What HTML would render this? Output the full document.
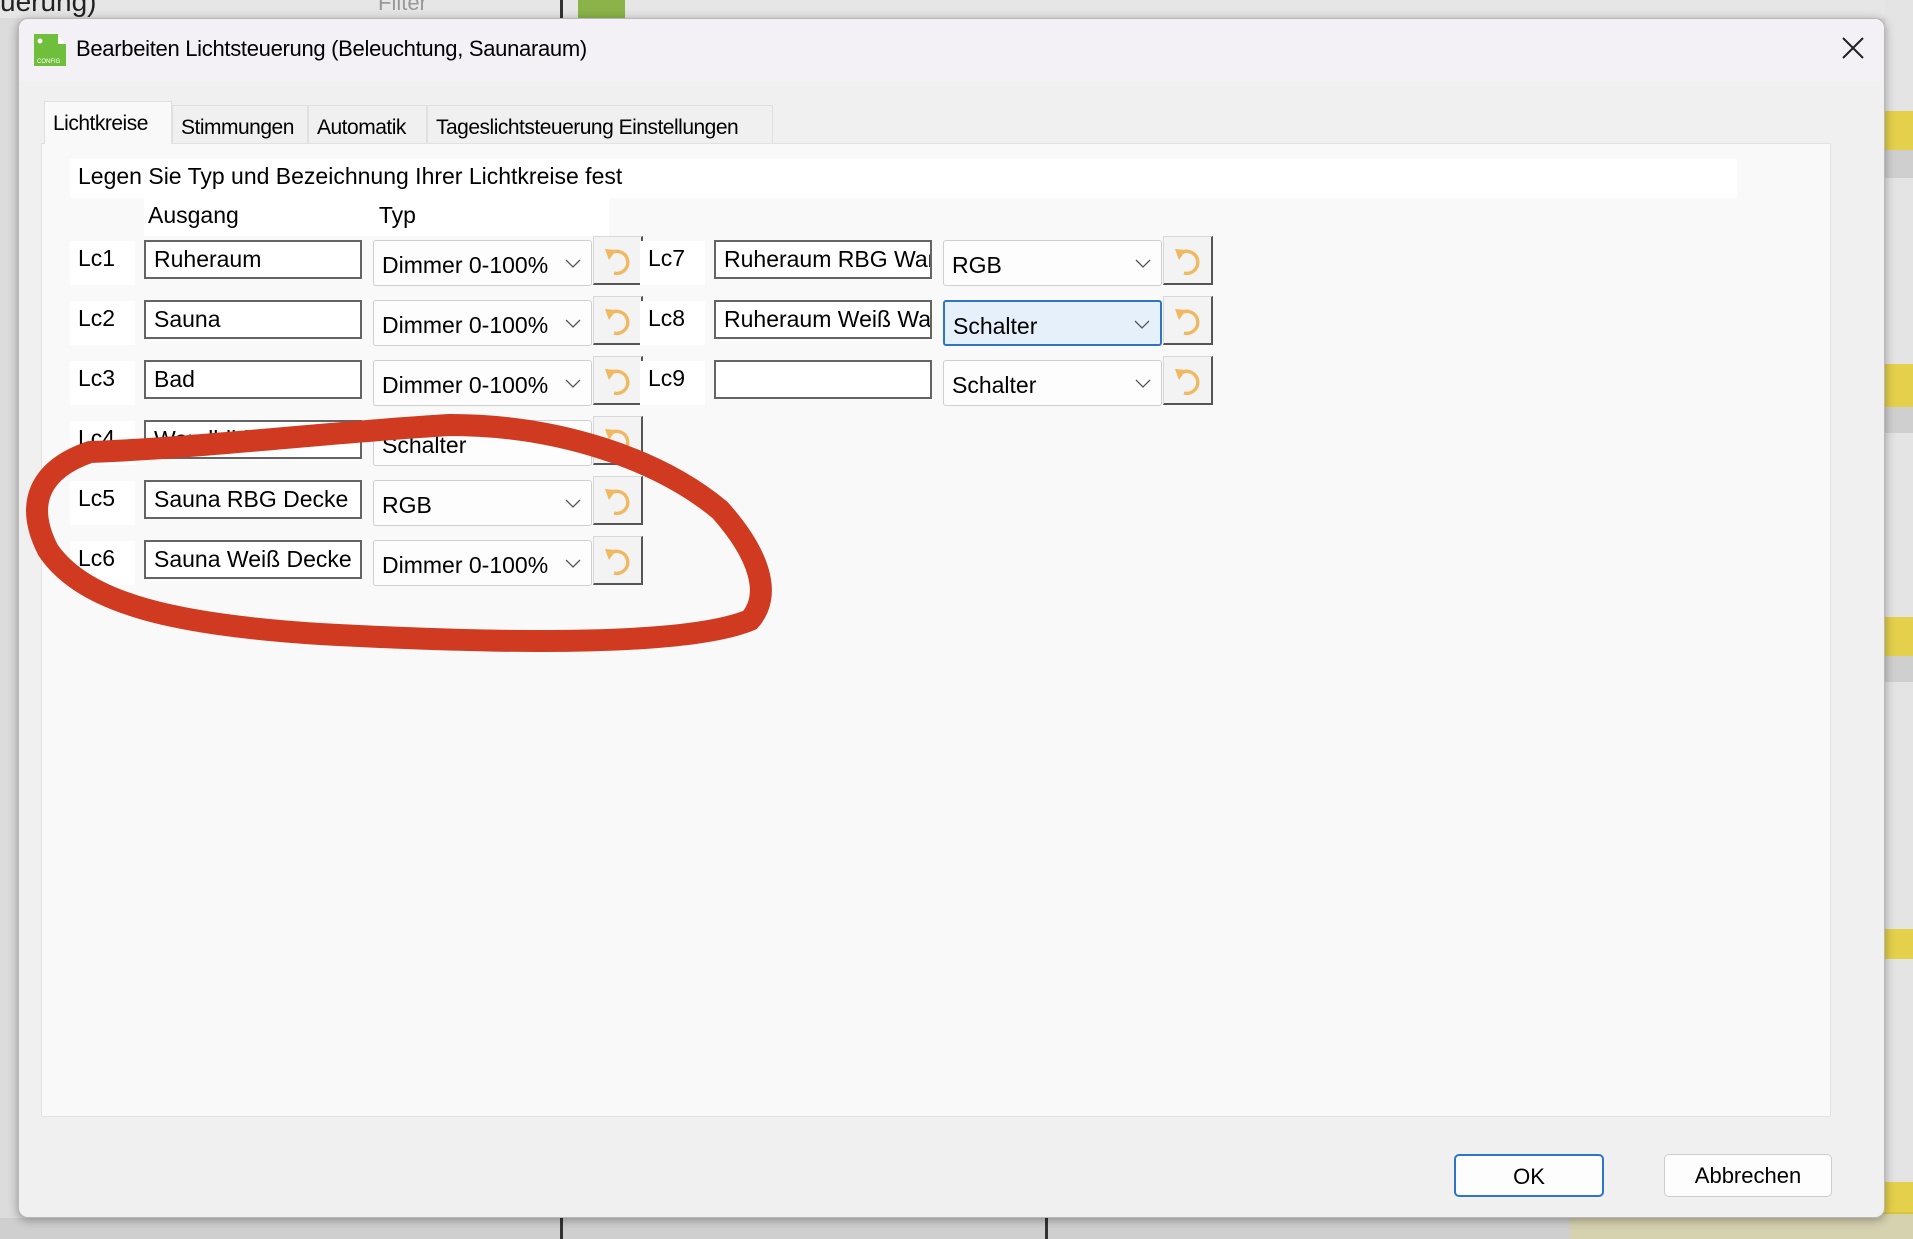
<!DOCTYPE html>
<html><head><meta charset="utf-8"><style>
*{box-sizing:border-box;margin:0;padding:0}
body{width:1913px;height:1239px;overflow:hidden;background:#dcdcdc;font-family:"Liberation Sans",sans-serif;position:relative;color:#000}
.abs{position:absolute}
.dlg{left:18px;top:18px;width:1867px;height:1200px;background:#f0f0f0;border:1px solid #b8b8b8;border-radius:10px;box-shadow:0 2px 10px rgba(0,0,0,.35);overflow:hidden}
.tb{left:0;top:0;width:100%;height:62px;background:#f3f0f6}
.t{font-size:22px;letter-spacing:-0.3px}
.tab{top:86px;height:39px;background:#f0f0f0;border:1px solid #e0e0e0;border-bottom:none;font-size:21px;padding:10px 0 0 8px;letter-spacing:-0.5px}
.panel{left:22px;top:124px;width:1790px;height:974px;background:#f9f9f9;border:1px solid #e2e2e2}
.lbl{background:#fff;font-size:23px;padding:4px 0 0 8px}
.inp{background:#fff;border:2px solid #646464;height:39px;font-size:23px;padding:4px 0 0 8px;white-space:nowrap;overflow:hidden}
.cb{background:#fdfdfd;border:1px solid #cfcfcf;border-radius:3px;height:46px;font-size:23px;padding:11px 0 0 8px}
.cb.sel{background:#e5f0fa;border:2px solid #2f75c6}
.cb svg{position:absolute;right:10px;top:18px}
.btn{width:50px;height:49px;background:#f3f3f3;border:1px solid #d8d8d8;border-right:2px solid #555;border-bottom:2px solid #555}
.btn svg{position:absolute;left:9px;top:8px}
</style></head><body>
<div class="abs" style="left:0;top:0;width:1913px;height:18px;background:#e6e6e6"></div>
<div class="abs" style="left:0;top:-14px;font-size:28px;color:#222">uerung)</div>
<div class="abs" style="left:378px;top:-10px;font-size:22px;color:#999">Filter</div>
<div class="abs" style="left:560px;top:0;width:3px;height:18px;background:#333"></div>
<div class="abs" style="left:578px;top:0;width:47px;height:18px;background:#8bb34a"></div>
<div class="abs" style="left:1885px;top:0;width:28px;height:1239px;background:#e4e4e4"></div>
<div class="abs" style="left:1885px;top:111px;width:28px;height:39px;background:#e4d04a"></div>
<div class="abs" style="left:1885px;top:150px;width:28px;height:28px;background:#cfcfcf"></div>
<div class="abs" style="left:1885px;top:364px;width:28px;height:43px;background:#e4d04a"></div>
<div class="abs" style="left:1885px;top:407px;width:28px;height:26px;background:#cfcfcf"></div>
<div class="abs" style="left:1885px;top:617px;width:28px;height:39px;background:#e4d04a"></div>
<div class="abs" style="left:1885px;top:656px;width:28px;height:26px;background:#cfcfcf"></div>
<div class="abs" style="left:1885px;top:929px;width:28px;height:30px;background:#e4d04a"></div>
<div class="abs" style="left:1885px;top:1182px;width:28px;height:35px;background:#e4d04a"></div>
<div class="abs" style="left:0;top:1218px;width:1913px;height:21px;background:#cfcfcf"></div>
<div class="abs" style="left:1570px;top:1212px;width:343px;height:27px;background:#d6d2b0;border-top:2px solid #d8c63a"></div>
<div class="abs" style="left:1045px;top:1218px;width:3px;height:21px;background:#333"></div>
<div class="abs" style="left:560px;top:1218px;width:3px;height:21px;background:#333"></div>

<div class="abs dlg">
 <div class="abs tb"></div>
 <svg class="abs" style="left:15px;top:15px" width="32" height="32" viewBox="0 0 32 32"><path d="M0 0H24L32 10V32H0Z" fill="#6fbf3c"/><path d="M24 0L32 10H24Z" fill="#fff"/><circle cx="6" cy="7" r="2.5" fill="#fff"/><text x="3" y="29" font-size="6" fill="#fff" font-family="Liberation Sans">CONFIG</text></svg>
 <div class="abs t" style="left:57px;top:17px">Bearbeiten Lichtsteuerung (Beleuchtung, Saunaraum)</div>
 <svg class="abs" style="left:1823px;top:18px" width="22" height="22"><path d="M1 1L21 21M21 1L1 21" stroke="#222" stroke-width="2"/></svg>

 <div class="abs tab" style="left:25px;top:82px;height:43px;width:128px;background:#f9f9f9;z-index:2">Lichtkreise</div>
 <div class="abs tab" style="left:153px;width:136px">Stimmungen</div>
 <div class="abs tab" style="left:289px;width:119px">Automatik</div>
 <div class="abs tab" style="left:408px;width:346px">Tageslichtsteuerung Einstellungen</div>

 <div class="abs panel"></div>
 <div class="abs lbl" style="left:51px;top:140px;width:1667px;height:39px">Legen Sie Typ und Bezeichnung Ihrer Lichtkreise fest</div>
 <div class="abs lbl" style="left:125px;top:179px;width:465px;height:38px;padding-left:0"><span style="margin-left:4px">Ausgang</span><span style="margin-left:140px">Typ</span></div>
 <div id="rows"></div>
</div>

<script>
var rows=[
 [0,"Lc1","Ruheraum","Dimmer 0-100%",0],
 [1,"Lc2","Sauna","Dimmer 0-100%",0],
 [2,"Lc3","Bad","Dimmer 0-100%",0],
 [3,"Lc4","Wandbild S","Schalter",0],
 [4,"Lc5","Sauna RBG Decke","RGB",0],
 [5,"Lc6","Sauna Weiß Decke","Dimmer 0-100%",0]
];
var rows2=[[0,"Lc7","Ruheraum RBG Warm","RGB",0],[1,"Lc8","Ruheraum Weiß Wand","Schalter",1],[2,"Lc9","","Schalter",0]];
var chev='<svg width="16" height="10"><path d="M1 1L8 8L15 1" fill="none" stroke="#555" stroke-width="1.3"/></svg>';
var arr='<svg width="32" height="32" viewBox="0 0 32 32"><path d="M8 8A11 11 0 1 1 11 28" fill="none" stroke="#f0b860" stroke-width="3.4"/><path d="M2 4L13 5L6 15Z" fill="#f0b860"/></svg>';
var h='';
function row(r,ox){var y=222+r[0]*60;
 h+='<div class="abs lbl" style="left:'+(51+ox)+'px;top:'+y+'px;width:65px;height:44px">'+r[1]+'</div>';
 h+='<div class="abs inp" style="left:'+(125+ox)+'px;top:'+(y-1)+'px;width:218px">'+r[2]+'</div>';
 h+='<div class="abs cb'+(r[4]?' sel':'')+'" style="left:'+(354+ox)+'px;top:'+(y-1)+'px;width:219px">'+r[3]+chev+'</div>';
 h+='<div class="abs btn" style="left:'+(574+ox)+'px;top:'+(y-5)+'px">'+arr+'</div>';}
rows.forEach(function(r){row(r,0)});rows2.forEach(function(r){row(r,570)});
document.getElementById('rows').innerHTML=h;
</script>
<div class="abs" style="left:1454px;top:1154px;width:150px;height:43px;background:#fdfdfd;border:2px solid #2f75c6;border-radius:5px;font-size:22px;text-align:center;padding-top:8px">OK</div>
<div class="abs" style="left:1664px;top:1154px;width:168px;height:43px;background:#fdfdfd;border:1px solid #ccc;border-radius:5px;font-size:22px;text-align:center;padding-top:8px">Abbrechen</div>
<svg class="abs" style="left:0;top:0" width="1913" height="1239"><path d="M90 452C200 448 330 432 450 425C560 425 660 460 720 510C760 555 772 595 750 620C690 645 520 645 320 634C180 625 85 605 48 550C25 505 38 470 90 452" fill="none" stroke="#d03a20" stroke-width="22" stroke-linecap="round"/></svg>
</body></html>
